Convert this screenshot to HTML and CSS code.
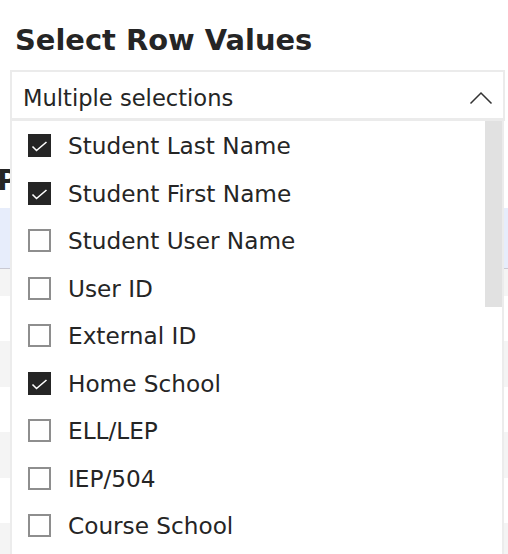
FILE: index.html
```html
<!DOCTYPE html>
<html lang="en">
<head>
<meta charset="utf-8">
<title>Select Row Values</title>
<link rel="stylesheet" href="styles.css">
</head>
<body>
<div class="page">
  <h2 class="title">Select Row Values</h2>
  <div class="dropdown">
    <div class="select">
      <span class="select-text">Multiple selections</span>
      <svg class="chevron" width="24" height="14" viewBox="0 0 24 14" aria-hidden="true">
        <path d="M1.5 12.5 L12 2 L22.5 12.5" fill="none" stroke="#333" stroke-width="1.5"/>
      </svg>
    </div>
    <div class="panel">
      <ul class="options">
        <li class="option"><span class="box checked"><svg viewBox="0 0 23 23" width="23" height="23"><path d="M4.5 12.5 L8.5 16.5 L18.5 8" fill="none" stroke="#fff" stroke-width="1.6"/></svg></span><span class="label">Student Last Name</span></li>
        <li class="option"><span class="box checked"><svg viewBox="0 0 23 23" width="23" height="23"><path d="M4.5 12.5 L8.5 16.5 L18.5 8" fill="none" stroke="#fff" stroke-width="1.6"/></svg></span><span class="label">Student First Name</span></li>
        <li class="option"><span class="box"></span><span class="label">Student User Name</span></li>
        <li class="option"><span class="box"></span><span class="label">User ID</span></li>
        <li class="option"><span class="box"></span><span class="label">External ID</span></li>
        <li class="option"><span class="box checked"><svg viewBox="0 0 23 23" width="23" height="23"><path d="M4.5 12.5 L8.5 16.5 L18.5 8" fill="none" stroke="#fff" stroke-width="1.6"/></svg></span><span class="label">Home School</span></li>
        <li class="option"><span class="box"></span><span class="label">ELL/LEP</span></li>
        <li class="option"><span class="box"></span><span class="label">IEP/504</span></li>
        <li class="option"><span class="box"></span><span class="label">Course School</span></li>
      </ul>
      <div class="scrollbar"><div class="thumb"></div></div>
    </div>
  </div>
  <h2 class="behind-title">Preview</h2>
  <div class="table">
    <div class="thead"></div>
    <div class="trow alt short"></div>
    <div class="trow"></div>
    <div class="trow alt"></div>
    <div class="trow"></div>
    <div class="trow alt"></div>
    <div class="trow"></div>
    <div class="trow alt"></div>
  </div>
</div>
</body>
</html>
```

FILE: styles.css
```css
html, body {
  margin: 0;
  padding: 0;
  background: #fff;
}
body {
  font-family: "DejaVu Sans", Verdana, sans-serif;
  color: #252525;
}
.page {
  height: 554px;
  overflow: hidden;
  padding-top: 23px;
  box-sizing: border-box;
}
.title {
  margin: 0 0 13px 0;
  padding-left: 15px;
  font-size: 28.9px;
  line-height: 34px;
  font-weight: bold;
  color: #252525;
}
.dropdown {
  position: relative;
  margin: 0 3px 0 10px;
}
.select {
  display: flex;
  align-items: center;
  height: 40px;
  padding: 6px 10px 0 11px;
  border: 2px solid #ebebeb;
  border-bottom-width: 3px;
  background: #fff;
}
.select-text {
  flex: 1;
  font-size: 22.6px;
  line-height: 40px;
}
.chevron {
  display: block;
}
.panel {
  position: absolute;
  top: 100%;
  left: 0;
  right: 1px;
  height: 440px;
  display: flex;
  background: #fff;
  border-left: 2px solid #ececec;
  border-right: 2px solid #ececec;
  overflow: hidden;
  z-index: 2;
}
.options {
  flex: 1;
  list-style: none;
  margin: 0;
  padding: 1px 0 0 16px;
}
.option {
  display: flex;
  align-items: center;
  height: 47.5px;
  gap: 17px;
}
.box {
  display: block;
  width: 23px;
  height: 23px;
  box-sizing: border-box;
  border: 2px solid #8e8e8e;
  background: #fff;
  flex: none;
}
.box.checked {
  border: none;
  background: #252525;
}
.box svg {
  display: block;
}
.label {
  font-size: 23.2px;
  line-height: 27px;
  white-space: nowrap;
}
.scrollbar {
  width: 17px;
  flex: none;
}
.thumb {
  height: 186px;
  background: #e1e1e1;
}
.behind-title {
  margin: 43px 0 10px -3px;
  font-size: 28.5px;
  line-height: 34px;
  font-weight: bold;
  color: #252525;
}
.thead {
  height: 60px;
  background: #e7edfb;
  border-bottom: 1px solid #c9c9d3;
}
.trow {
  height: 45.4px;
  background: #fff;
}
.trow.alt {
  background: #f4f4f4;
}
.trow.short {
  height: 27px;
}
```
